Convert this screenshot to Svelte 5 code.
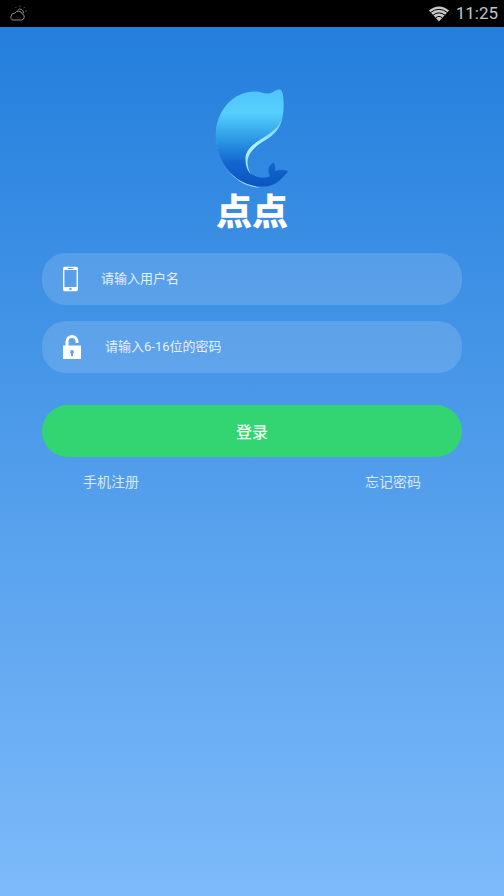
<script>
  let username = $state('');
  let password = $state('');
</script>

<div class="screen">
  <header class="status-bar">
    <svg class="weather" viewBox="0 0 20 18" aria-hidden="true">
      <path
        d="M5 15h8.500a3.200 3.200 0 0 0 .6-6.200a4 4 0 0 0-7.300-.6a3.200 3.200 0 0 0-3.600 3a2.500 2.500 0 0 0 1.800 3.800z M9.500 5.700a3 3 0 1 1 5.500 3"
      />
      <path d="M12 .5v1M7.800 2.400l.7.700M16.400 2.400l-.7.700M17.500 6h1" />
    </svg>
    <div class="status-right">
      <svg class="wifi" viewBox="0 0 20 16" aria-hidden="true">
        <path class="fan" d="M0 4.500Q10-3.500 20 4.500L10 15.500z" />
        <path class="arc" d="M1.500 6.500Q10 .2 18.500 6.500M4 9.200Q10 4.500 16 9.200M6.500 12Q10 8.800 13.500 12" />
      </svg>
      <time>11:25</time>
    </div>
  </header>

  <main>
    <div class="brand">
      <svg class="dolphin" viewBox="16 8 74 100" aria-hidden="true">
        <defs>
          <linearGradient id="body" x1="0" y1="0" x2="0" y2="1">
            <stop offset="0" stop-color="#4fc4fb" />
            <stop offset="0.24" stop-color="#55d0fe" />
            <stop offset="0.5" stop-color="#2f9ce6" />
            <stop offset="0.76" stop-color="#1265cf" />
            <stop offset="1" stop-color="#0a56c0" />
          </linearGradient>
          <linearGradient id="edge" x1="0" y1="0" x2="0" y2="1">
            <stop offset="0" stop-color="#55d0fe" />
            <stop offset="0.5" stop-color="#b5f2ff" />
            <stop offset="1" stop-color="#8adcfa" />
          </linearGradient>
        </defs>
        <path
          fill="#a5d8fa"
          d="M17 58C19 83 36 107 61 107.500C38 103 25 85 17 58z"
        />
        <path
          fill="url(#body)"
          d="M79 9.500C82 9 83.500 11 84 15C85 23 85 31 83 40C80 50 73 55 65 60C55 66 47 71 47 80C47 88 50 94 56 96C61 98 67 98 71 96C68 91 69 86 74.500 82.500C76.500 85 76.500 88 76 91C80 89.500 85 89.500 89.500 91C87 94 85 96 82 99C76 105 70 107 61 106.500C37 105 20 86 17 61C14 34 33 11 56 11.500C61 11.500 65 14 70 13.500C74 13 75 10.500 79 9.500z"
        />
        <path
          fill="url(#edge)"
          d="M83 39C79 48 72 53 64 58C52 65 46 71 46.500 80C46.700 86 48 90 52 94.500C49 89 48 84 48.700 79.500C50.500 71 57 66 65 61C75 55 81 49 83 39z"
        />
      </svg>
      <h1>点点</h1>
    </div>

    <form onsubmit={(e) => e.preventDefault()}>
      <div class="field">
        <label for="username" aria-label="用户名">
          <svg class="phone" viewBox="0 0 16 26" aria-hidden="true">
            <path
              fill-rule="evenodd"
              d="M2 0h12a2 2 0 0 1 2 2v22a2 2 0 0 1-2 2H2a2 2 0 0 1-2-2V2a2 2 0 0 1 2-2zM1.500 3.500v18h13v-18zM5 1.300v1h6v-1zM8 22.400a1.300 1.300 0 1 0 0 2.600a1.300 1.300 0 0 0 0-2.600z"
            />
          </svg>
        </label>
        <input id="username" type="text" placeholder="请输入用户名" bind:value={username} />
      </div>

      <div class="field password">
        <label for="password" aria-label="密码">
          <svg class="lock" viewBox="0 0 18 24" aria-hidden="true">
            <path class="shackle" d="M4 11V6.500a5 5 0 0 1 10 0V8" />
            <path
              fill-rule="evenodd"
              d="M0 10.500h18V24H0zM9 15a1.900 1.900 0 0 0-1 3.500V21h2v-2.500a1.900 1.900 0 0 0-1-3.500z"
            />
          </svg>
        </label>
        <input
          id="password"
          type="password"
          placeholder="请输入6-16位的密码"
          bind:value={password}
        />
      </div>

      <button type="submit">登录</button>
    </form>

    <nav>
      <a href="#register">手机注册</a>
      <a href="#forgot">忘记密码</a>
    </nav>
  </main>
</div>

<style>
  :global(body) {
    margin: 0;
  }

  .screen {
    display: flex;
    flex-direction: column;
    min-height: 100vh;
    font-family: Roboto, 'Noto Sans CJK SC', sans-serif;
    color: #fff;
    background: #7bb8f9;
  }

  .status-bar {
    display: flex;
    align-items: center;
    justify-content: space-between;
    height: 27px;
    padding: 0 6px 0 8px;
    background: #000;
  }

  .weather {
    width: 20px;
    height: 18px;
    fill: none;
    stroke: #8c8c8c;
    stroke-width: 1;
  }

  .status-right {
    display: flex;
    align-items: center;
    gap: 7px;
    font-size: 17px;
    line-height: 27px;
    color: #c4c4c4;
  }

  .wifi {
    width: 20px;
    height: 16px;
  }

  .fan {
    fill: #c9c9c9;
  }

  .arc {
    fill: none;
    stroke: #000;
    stroke-width: 1;
  }

  main {
    flex: 1;
    padding: 61px 42px 0;
    background: linear-gradient(#237fdc, #7dbafa);
  }

  .brand {
    display: flex;
    flex-direction: column;
    align-items: center;
  }

  .dolphin {
    width: 74px;
    height: 100px;
  }

  h1 {
    margin: 5px 0 0;
    font-size: 36px;
    line-height: 40px;
    font-weight: 900;
  }

  form {
    display: flex;
    flex-direction: column;
    gap: 16px;
    margin-top: 20px;
  }

  .field {
    display: flex;
    align-items: center;
    height: 52px;
    padding: 0 21px;
    border-radius: 24px;
    background: rgba(245, 245, 255, 0.15);
  }

  label {
    display: flex;
    width: 38px;
  }

  .password label {
    width: 42px;
  }

  .phone {
    width: 15px;
    height: 26px;
    fill: #fff;
  }

  .lock {
    width: 18px;
    height: 24px;
    fill: #fff;
  }

  .shackle {
    fill: none;
    stroke: #fff;
    stroke-width: 3;
  }

  input {
    flex: 1;
    min-width: 0;
    padding: 0;
    border: none;
    outline: none;
    background: transparent;
    font-family: inherit;
    font-size: 13px;
    line-height: 20px;
    color: #fff;
  }

  input::placeholder {
    color: #e2f0fe;
    opacity: 1;
  }

  button {
    height: 52px;
    margin-top: 16px;
    padding: 0;
    border: none;
    border-radius: 26px;
    background: #32d572;
    font-family: inherit;
    font-size: 16px;
    font-weight: 500;
    color: #eafff0;
    cursor: pointer;
  }

  nav {
    display: flex;
    justify-content: space-between;
    margin-top: 15px;
    padding: 0 41px;
    font-size: 14px;
    line-height: 20px;
  }

  a {
    color: #d6e8fc;
    text-decoration: none;
  }
</style>
